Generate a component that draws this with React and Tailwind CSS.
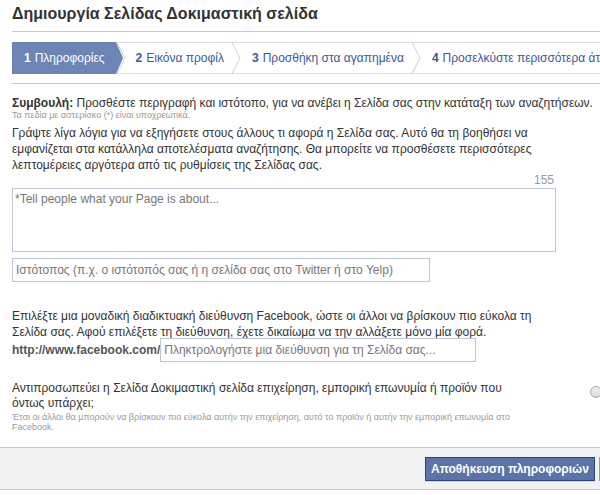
import React from 'react';

const tabs = [
  { num: '1', label: 'Πληροφορίες' },
  { num: '2', label: 'Εικόνα προφίλ' },
  { num: '3', label: 'Προσθήκη στα αγαπημένα' },
  { num: '4', label: 'Προσελκύστε περισσότερα άτομα' },
];

function Arrow({ active }) {
  // chevron drawn between two tabs
  return (
    <svg width="10" height="32" viewBox="0 0 10 32" className="shrink-0 block">
      <rect x="0" y="0" width="10" height="32" fill="#fff" />
      <line x1="0" y1="0.5" x2="10" y2="0.5" stroke="#d8dfea" />
      <line x1="0" y1="31.5" x2="10" y2="31.5" stroke="#d8dfea" />
      {active ? (
        <>
          <polygon points="0,0 7,16 0,32" fill="#6d84b4" />
          <polyline points="1,0.5 9,16 1,31.5" fill="none" stroke="#c8d0e0" />
        </>
      ) : (
        <polyline points="0,0.5 8,16 0,31.5" fill="none" stroke="#c8d0e0" />
      )}
    </svg>
  );
}

function Tabs() {
  return (
    <div className="flex h-8 mt-[10px]">
      {tabs.map((t, i) => (
        <React.Fragment key={i}>
          <div
            className={`h-8 flex items-center whitespace-nowrap text-[12px] ${
              i === 0
                ? 'bg-[#6d84b4] text-white pl-3 pr-[11px]'
                : 'bg-white text-[#3b5998] border-y border-[#d8dfea] pl-[10px] pr-[8px]'
            }`}
          >
            <span className="font-bold mr-1">{t.num}</span>
            {t.label}
          </div>
          {i < tabs.length - 1 && <Arrow active={i === 0} />}
        </React.Fragment>
      ))}
    </div>
  );
}

export default function App() {
  return (
    <div
      className="w-[600px] h-[495px] overflow-hidden bg-white text-[#333]"
      style={{ fontFamily: '"Liberation Sans", Arial, sans-serif' }}
    >
      <div className="w-[640px]">
        <div className="pl-3">
          <h1 className="text-[16px] font-bold text-[#333] leading-5 pt-1 pb-[7px]">
            Δημιουργία Σελίδας Δοκιμαστική σελίδα
          </h1>
          <div className="border-t border-[#ccc]" />
          <Tabs />
          <div className="border-t border-[#ccc] mt-[9px]" />

          <div className="pt-[12px]">
            <p className="text-[12px] leading-[14px] whitespace-nowrap">
              <span className="font-bold">Συμβουλή:</span> Προσθέστε περιγραφή και ιστότοπο, για να ανέβει η Σελίδα σας στην κατάταξη των αναζητήσεων.
            </p>
            <p className="text-[9px] leading-[10px] text-[#999]">
              Τα πεδία με αστερίσκο (*) είναι υποχρεωτικά.
            </p>

            <p className="text-[12px] leading-4 mt-[5px] w-[544px]">
              Γράψτε λίγα λόγια για να εξηγήσετε στους άλλους τι αφορά η Σελίδα σας. Αυτό θα τη βοηθήσει να εμφανίζεται στα κατάλληλα αποτελέσματα αναζήτησης. Θα μπορείτε να προσθέσετε περισσότερες λεπτομέρειες αργότερα από τις ρυθμίσεις της Σελίδας σας.
            </p>

            <div className="w-[544px]">
              <div className="text-right text-[12px] leading-4 text-[#999] mt-[-1px] pr-[2px]">155</div>
              <div className="h-[64px] border border-[#bdc7d8] px-[2px] pt-[2px] text-[12px] leading-4 text-[#777]">
                *Tell people what your Page is about...
              </div>
            </div>
            <div className="w-[418px] h-6 border border-[#bdc7d8] mt-[6px] px-[3px] flex items-center text-[12px] text-[#777]">
              Ιστότοπος (π.χ. ο ιστότοπός σας ή η σελίδα σας στο Twitter ή στο Yelp)
            </div>

            <p className="text-[12px] leading-4 mt-[26px] w-[530px]">
              Επιλέξτε μια μοναδική διαδικτυακή διεύθυνση Facebook, ώστε οι άλλοι να βρίσκουν πιο εύκολα τη Σελίδα σας. Αφού επιλέξετε τη διεύθυνση, έχετε δικαίωμα να την αλλάξετε μόνο μία φορά.
            </p>
            <div className="flex items-center mt-[-2px]">
              <span className="text-[12px] font-bold text-[#555]">http://www.facebook.com/</span>
              <div className="w-[316px] h-6 border border-[#bdc7d8] px-[3px] flex items-center text-[12px] text-[#777]">
                Πληκτρολογήστε μια διεύθυνση για τη Σελίδα σας...
              </div>
            </div>
          </div>

          <div className="flex items-start mt-[19px]">
            <div className="w-[530px]">
              <p className="text-[12px] leading-[15px] w-[500px]">
                Αντιπροσωπεύει η Σελίδα Δοκιμαστική σελίδα επιχείρηση, εμπορική επωνυμία ή προϊόν που όντως υπάρχει;
              </p>
              <p className="text-[9px] leading-[10px] text-[#999] mt-[1px] w-[518px]">
                Έτσι οι άλλοι θα μπορούν να βρίσκουν πιο εύκολα αυτήν την επιχείρηση, αυτό το προϊόν ή αυτήν την εμπορική επωνυμία στο Facebook.
              </p>
            </div>
            <div className="ml-[48px] mt-[5px] w-3 h-3 rounded-full border border-[#aaa] bg-gradient-to-b from-[#f4f4f4] to-[#d8d8d8]" />
          </div>
        </div>

        <div className="mt-[15px] h-[43px] bg-[#f2f2f2] border-y border-[#ccc] flex items-center pl-[425px] gap-[4px]">
          <button className="h-6 px-[5px] bg-[#5b74a8] border border-[#29447e] text-white text-[12px] font-bold shadow-[0_1px_0_rgba(0,0,0,0.1)] whitespace-nowrap">
            Αποθήκευση πληροφοριών
          </button>
          <button className="h-6 w-[60px] bg-[#f6f7f8] border border-[#999]" />
        </div>
      </div>
    </div>
  );
}
